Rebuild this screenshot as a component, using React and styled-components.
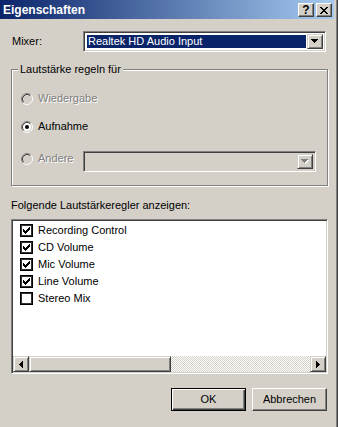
import React from 'react';
import styled, { createGlobalStyle } from 'styled-components';

const Global = createGlobalStyle`
  html, body { margin: 0; padding: 0; background: #d4d0c8; }
  body { font-family: "Liberation Sans", Arial, sans-serif; font-size: 11px; color: #000; }
  #root { width: 338px; height: 427px; }
`;

const raised = `
  box-sizing: border-box;
  background: #d4d0c8;
  border: 1px solid;
  border-color: #fff #404040 #404040 #fff;
  box-shadow: inset -1px -1px #808080;
`;

const Window = styled.div`
  width: 338px;
  height: 427px;
  box-sizing: border-box;
  padding-right: 2px;
  background: #d4d0c8;
  box-shadow: inset -1px 0 #404040, inset -2px 0 #808080;
  display: flex;
  flex-direction: column;
`;

const TitleBar = styled.div`
  height: 19px;
  margin-right: 2px;
  padding: 0 2px 0 3px;
  display: flex;
  align-items: center;
  background: linear-gradient(to right, #0a246a, #a6caf0);
`;

const TitleText = styled.div`
  flex: 1;
  color: #fff;
  font-weight: bold;
  font-size: 12px;
  line-height: 14px;
`;

const TitleButtons = styled.div`
  display: flex;
  gap: 2px;
  margin-top: 1px;
`;

const TitleButton = styled.div`
  ${raised}
  width: 16px;
  height: 14px;
  display: flex;
  align-items: center;
  justify-content: center;
  font-weight: bold;
  font-size: 12px;
  line-height: 12px;
`;

const Content = styled.div`
  flex: 1;
  display: flex;
  flex-direction: column;
  padding: 0 8px 0 11px;
`;

const MixerRow = styled.div`
  margin-top: 12px;
  height: 21px;
  display: flex;
  align-items: center;
`;

const FieldLabel = styled.div`
  width: 71px;
  padding-left: 1px;
  line-height: 13px;
`;

const Combo = styled.div`
  box-sizing: border-box;
  height: 21px;
  ${p => (p.$grow ? 'flex: 1; margin-right: 2px;' : `width: ${p.$width}px; margin-left: auto;`)}
  display: flex;
  padding: 2px;
  border: 1px solid;
  border-color: #808080 #fff #fff #808080;
  box-shadow: inset 1px 1px #404040, inset -1px -1px #d4d0c8;
  background: ${p => (p.$disabled ? '#d4d0c8' : '#fff')};
`;

const ComboValue = styled.div`
  flex: 1;
  margin: 1px;
  padding-left: 1px;
  display: flex;
  align-items: center;
  background: ${p => (p.$selected ? '#0a246a' : 'transparent')};
  color: ${p => (p.$selected ? '#fff' : '#000')};
  line-height: 13px;
`;

const ArrowButton = styled.div`
  ${raised}
  border-color: #d4d0c8 #404040 #404040 #d4d0c8;
  box-shadow: inset 1px 1px #fff, inset -1px -1px #808080;
  width: 16px;
  display: flex;
  align-items: center;
  justify-content: center;
`;

const GroupBox = styled.div`
  position: relative;
  margin-top: 17px;
  height: 117px;
  box-sizing: border-box;
  border: 1px solid #808080;
  box-shadow: inset 1px 1px #fff, 1px 1px 0 #fff;
  padding: 22px 11px 0 9px;
  display: flex;
  flex-direction: column;
`;

const GroupCaption = styled.div`
  position: absolute;
  left: 6px;
  top: -7px;
  padding: 0 2px;
  background: #d4d0c8;
  line-height: 13px;
`;

const RadioRow = styled.div`
  margin-top: ${p => p.$mt || 0}px;
  display: flex;
  align-items: flex-start;
  min-height: 13px;
`;

const RadioLabel = styled.div`
  display: flex;
  align-items: center;
  gap: 5px;
  height: 13px;
  margin-top: ${p => p.$offset || 0}px;
  line-height: 13px;
  color: ${p => (p.$disabled ? '#808080' : '#000')};
  text-shadow: ${p => (p.$disabled ? '1px 1px 0 #fff' : 'none')};
`;

const SectionLabel = styled.div`
  margin-top: 13px;
  line-height: 13px;
`;

const ListBox = styled.div`
  margin-top: 7px;
  height: 155px;
  box-sizing: border-box;
  border: 1px solid;
  border-color: #808080 #fff #fff #808080;
  box-shadow: inset 1px 1px #404040, inset -1px -1px #d4d0c8;
  padding: 1px;
  display: flex;
  flex-direction: column;
`;

const Items = styled.div`
  flex: 1;
  background: #fff;
  padding: 1px 0 0 7px;
`;

const Item = styled.div`
  height: 17px;
  display: flex;
  align-items: center;
  gap: 5px;
  line-height: 13px;
`;

const CheckBox = styled.div`
  width: 13px;
  height: 13px;
  box-sizing: border-box;
  border: 1px solid #000;
  box-shadow: inset 0 0 0 1px #303030;
  background: #fff;
  position: relative;
`;

const ScrollBar = styled.div`
  height: 16px;
  display: flex;
`;

const ScrollButton = styled.div`
  ${raised}
  border-color: #d4d0c8 #404040 #404040 #d4d0c8;
  box-shadow: inset 1px 1px #fff, inset -1px -1px #808080;
  width: 16px;
  height: 16px;
  display: flex;
  align-items: center;
  justify-content: center;
`;

const Thumb = styled.div`
  ${raised}
  border-color: #d4d0c8 #404040 #404040 #d4d0c8;
  box-shadow: inset 1px 1px #fff, inset -1px -1px #808080;
  width: ${p => p.$width}px;
  height: 16px;
`;

const Track = styled.div`
  flex: 1;
  background: repeating-conic-gradient(#d4d0c8 0 25%, #fff 0 50%) 0 0 / 2px 2px;
`;

const ButtonRow = styled.div`
  margin-top: 14px;
  display: flex;
  justify-content: flex-end;
  gap: 6px;
  padding-right: 1px;
`;

const PushButton = styled.div`
  width: 75px;
  height: 23px;
  box-sizing: border-box;
  background: #d4d0c8;
  display: flex;
  align-items: center;
  justify-content: center;
  line-height: 13px;
  border: 1px solid;
  border-color: ${p => (p.$default ? '#000' : '#fff #404040 #404040 #fff')};
  box-shadow: ${p =>
    p.$default
      ? 'inset 1px 1px #fff, inset -1px -1px #404040, inset -2px -2px #808080'
      : 'inset -1px -1px #808080, inset 1px 1px #d4d0c8'};
`;

const DownArrow = ({ color = '#000', shadow }) => (
  <svg width="8" height="5" viewBox="0 0 8 5" shapeRendering="crispEdges">
    {shadow && (
      <g fill="#fff" transform="translate(1,1)">
        <rect x="0" y="0" width="7" height="1" />
        <rect x="1" y="1" width="5" height="1" />
        <rect x="2" y="2" width="3" height="1" />
        <rect x="3" y="3" width="1" height="1" />
      </g>
    )}
    <g fill={color}>
      <rect x="0" y="0" width="7" height="1" />
      <rect x="1" y="1" width="5" height="1" />
      <rect x="2" y="2" width="3" height="1" />
      <rect x="3" y="3" width="1" height="1" />
    </g>
  </svg>
);

const SideArrow = ({ dir }) => (
  <svg width="4" height="7" viewBox="0 0 4 7" shapeRendering="crispEdges"
    style={dir === 'right' ? { transform: 'scaleX(-1)' } : undefined}>
    <g fill="#000">
      <rect x="0" y="3" width="1" height="1" />
      <rect x="1" y="2" width="1" height="3" />
      <rect x="2" y="1" width="1" height="5" />
      <rect x="3" y="0" width="1" height="7" />
    </g>
  </svg>
);

const CloseGlyph = () => (
  <svg width="8" height="7" viewBox="0 0 8 7" shapeRendering="crispEdges">
    <g fill="#000">
      <rect x="0" y="0" width="2" height="1" /><rect x="6" y="0" width="2" height="1" />
      <rect x="1" y="1" width="2" height="1" /><rect x="5" y="1" width="2" height="1" />
      <rect x="2" y="2" width="4" height="1" />
      <rect x="3" y="3" width="2" height="1" />
      <rect x="2" y="4" width="4" height="1" />
      <rect x="1" y="5" width="2" height="1" /><rect x="5" y="5" width="2" height="1" />
      <rect x="0" y="6" width="2" height="1" /><rect x="6" y="6" width="2" height="1" />
    </g>
  </svg>
);

const CheckGlyph = () => (
  <svg width="7" height="7" viewBox="0 0 7 7" shapeRendering="crispEdges"
    style={{ position: 'absolute', left: 2, top: 2 }}>
    <g fill="#000">
      <rect x="6" y="0" width="1" height="1" />
      <rect x="5" y="1" width="2" height="1" />
      <rect x="0" y="2" width="1" height="1" /><rect x="4" y="2" width="3" height="1" />
      <rect x="0" y="3" width="2" height="1" /><rect x="3" y="3" width="3" height="1" />
      <rect x="0" y="4" width="5" height="1" />
      <rect x="1" y="5" width="3" height="1" />
      <rect x="2" y="6" width="1" height="1" />
    </g>
  </svg>
);

const RadioIcon = ({ checked, disabled }) => (
  <svg width="12" height="12" viewBox="0 0 12 12">
    <circle cx="6" cy="6" r="4.5" fill={disabled ? '#d4d0c8' : '#fff'} />
    <path d="M2.11 9.89 A5.5 5.5 0 0 1 9.89 2.11" fill="none" stroke="#808080" strokeWidth="1" />
    <path d="M9.89 2.11 A5.5 5.5 0 0 1 2.11 9.89" fill="none" stroke="#fff" strokeWidth="1" />
    <path d="M2.82 9.18 A4.5 4.5 0 0 1 9.18 2.82" fill="none" stroke="#404040" strokeWidth="1" />
    <path d="M9.18 2.82 A4.5 4.5 0 0 1 2.82 9.18" fill="none" stroke="#d4d0c8" strokeWidth="1" />
    {checked && <circle cx="6" cy="6" r="2" fill="#000" />}
  </svg>
);

const Radio = ({ label, checked, disabled, offset }) => (
  <RadioLabel $disabled={disabled} $offset={offset}>
    <RadioIcon checked={checked} disabled={disabled} />
    <span>{label}</span>
  </RadioLabel>
);

const controls = [
  { name: 'Recording Control', checked: true },
  { name: 'CD Volume', checked: true },
  { name: 'Mic Volume', checked: true },
  { name: 'Line Volume', checked: true },
  { name: 'Stereo Mix', checked: false },
];

export default function App() {
  return (
    <>
      <Global />
      <Window>
        <TitleBar>
          <TitleText>Eigenschaften</TitleText>
          <TitleButtons>
            <TitleButton>?</TitleButton>
            <TitleButton><CloseGlyph /></TitleButton>
          </TitleButtons>
        </TitleBar>
        <Content>
          <MixerRow>
            <FieldLabel>Mixer:</FieldLabel>
            <Combo $grow>
              <ComboValue $selected>Realtek HD Audio Input</ComboValue>
              <ArrowButton><DownArrow /></ArrowButton>
            </Combo>
          </MixerRow>

          <GroupBox>
            <GroupCaption>Lautstärke regeln für</GroupCaption>
            <RadioRow>
              <Radio label="Wiedergabe" disabled />
            </RadioRow>
            <RadioRow $mt={15}>
              <Radio label="Aufnahme" checked />
            </RadioRow>
            <RadioRow $mt={18}>
              <Radio label="Andere" disabled offset={1} />
              <Combo $width={233} $disabled>
                <ComboValue />
                <ArrowButton><DownArrow color="#808080" shadow /></ArrowButton>
              </Combo>
            </RadioRow>
          </GroupBox>

          <SectionLabel>Folgende Lautstärkeregler anzeigen:</SectionLabel>
          <ListBox>
            <Items>
              {controls.map(c => (
                <Item key={c.name}>
                  <CheckBox>{c.checked && <CheckGlyph />}</CheckBox>
                  <span>{c.name}</span>
                </Item>
              ))}
            </Items>
            <ScrollBar>
              <ScrollButton><SideArrow dir="left" /></ScrollButton>
              <Thumb $width={142} />
              <Track />
              <ScrollButton><SideArrow dir="right" /></ScrollButton>
            </ScrollBar>
          </ListBox>

          <ButtonRow>
            <PushButton $default>OK</PushButton>
            <PushButton>Abbrechen</PushButton>
          </ButtonRow>
        </Content>
      </Window>
    </>
  );
}
